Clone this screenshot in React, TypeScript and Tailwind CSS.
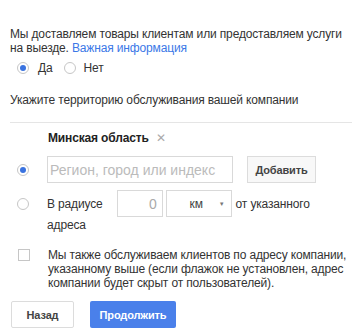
export default function App() {
  return (
    <div className="w-[362px] h-[335px] bg-white pl-[10px] pr-[4px] pt-[27px] font-['Liberation_Sans',Arial,sans-serif] text-[12px] tracking-[-0.15px] leading-[14px] text-[#333]">
      {/* Intro */}
      <p>
        Мы доставляем товары клиентам или предоставляем услуги на выезде.{" "}
        <a className="inline-block text-[#3b78e7]">Важная информация</a>
      </p>

      <div className="mt-[6px] flex items-center pl-[7px]">
        <Radio checked />
        <span className="ml-[9px]">Да</span>
        <span className="ml-[11px] flex">
          <Radio />
        </span>
        <span className="ml-[8px]">Нет</span>
      </div>

      <p className="mt-[18px]">Укажите территорию обслуживания вашей компании</p>

      <div className="mt-[15px] mr-[6px] h-px bg-[#e5e5e5]" />

      {/* Selected region */}
      <div className="mt-[8px] flex items-center pl-[38px]">
        <span className="font-bold text-[#222]">Минская область</span>
        <span className="ml-[7px] text-[#aaa] text-[12px] leading-[14px]">✕</span>
      </div>

      {/* Region input */}
      <div className="mt-[11px] flex items-center">
        <div className="w-[37px] pl-[7px] flex">
          <Radio checked />
        </div>
        <div className="w-[186px] h-[27px] border border-[#d9d9d9] flex items-center px-[2px] text-[14px] tracking-normal text-[#bbb]">
          Регион, город или индекс
        </div>
        <button className="ml-[14px] h-[27px] w-[69px] border border-[#dcdcdc] bg-[#f8f8f8] font-bold text-[11px] text-[#444]">
          Добавить
        </button>
      </div>

      {/* Radius */}
      <div className="mt-[7px] flex">
        <div className="w-[37px] pl-[7px] pt-[8px]">
          <Radio />
        </div>
        <div>
          <div className="flex items-center h-[27px]">
            <span>В радиусе</span>
            <div className="ml-[14px] w-[46px] h-[27px] border border-[#d9d9d9] flex items-center justify-end pr-[5px] text-[14px] text-[#aaa]">
              0
            </div>
            <div className="ml-[3px] w-[66px] h-[27px] border border-[#d9d9d9] flex items-center pl-[23px] pr-[6px] text-[#444]">
              <span>км</span>
              <span className="ml-auto text-[6px] text-[#777]">▼</span>
            </div>
            <span className="ml-[4px]">от указанного</span>
          </div>
          <div className="mt-[1px]">адреса</div>
        </div>
      </div>

      {/* Checkbox */}
      <div className="mt-[16px] flex">
        <div className="w-[38px] pl-[8px] pt-[1px]">
          <div className="w-[12px] h-[12px] border border-[#c6c6c6] bg-white" />
        </div>
        <p className="w-[306px]">
          Мы также обслуживаем клиентов по адресу компании, указанному выше (если флажок не установлен, адрес компании будет скрыт от пользователей).
        </p>
      </div>

      {/* Actions */}
      <div className="mt-[11px] flex items-center pl-[1px]">
        <button className="h-[27px] w-[63px] rounded-[2px] border border-[#dcdcdc] bg-white font-bold text-[11px] text-[#444]">
          Назад
        </button>
        <button className="ml-[16px] h-[27px] w-[86px] rounded-[2px] bg-[#4a80ea] font-bold text-[11px] text-white">
          Продолжить
        </button>
      </div>
    </div>
  );
}

function Radio({ checked = false }: { checked?: boolean }) {
  return (
    <span className="inline-flex w-[12px] h-[12px] rounded-full border border-[#c6c6c6] bg-white items-center justify-center">
      {checked && <span className="w-[6px] h-[6px] rounded-full bg-[#3a73e0]" />}
    </span>
  );
}
